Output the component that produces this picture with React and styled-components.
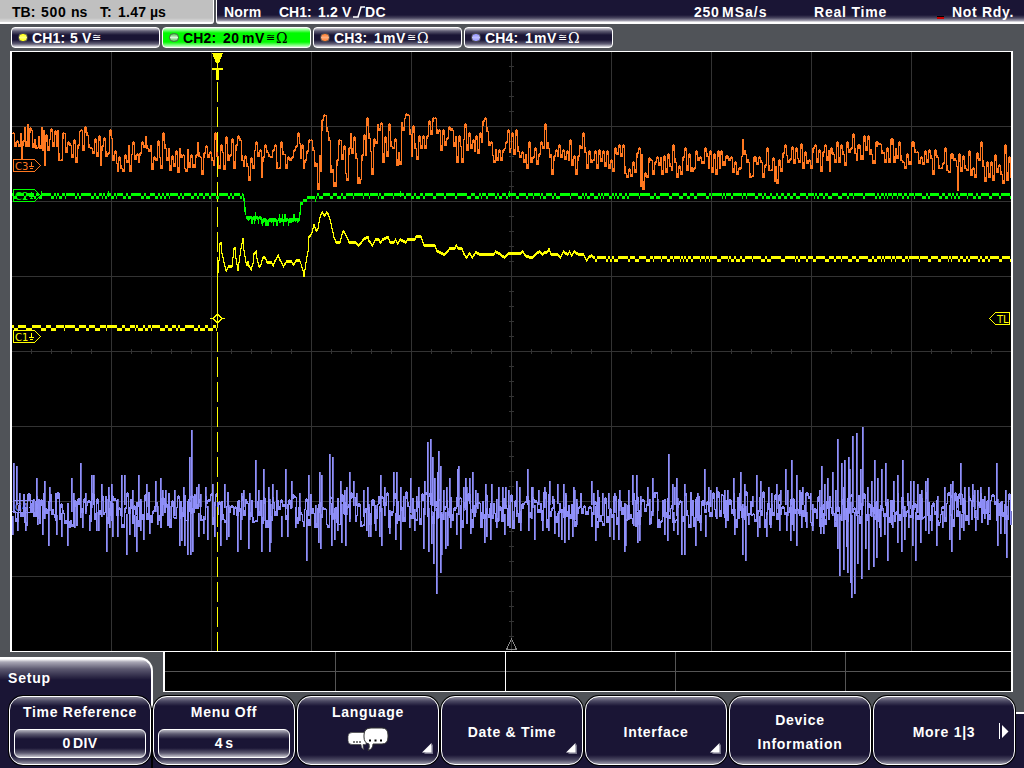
import styled, { createGlobalStyle } from 'styled-components';

const GlobalStyle = createGlobalStyle`
  body {
    margin: 0;
    background: #505358;
    font-family: 'Liberation Sans', Arial, sans-serif;
    font-size: 14px;
    font-weight: bold;
    color: #fff;
  }

  * {
    box-sizing: border-box;
  }
`;

const Screen = styled.div`
  width: 1024px;
  height: 768px;
  overflow: hidden;
  display: flex;
  flex-direction: column;
  background: #505358;
`;

const TopBar = styled.header`
  display: flex;
  gap: 2px;
  height: 24px;
`;

const TimeBase = styled.div`
  display: flex;
  width: 214px;
  padding: 4px 0 0 12px;
  line-height: 16px;
  color: #000;
  background: linear-gradient(#c0c0c0 18px, #e0e0e0 22px, #fff 22px);
  border-right: 1px solid #fff;
  border-bottom-right-radius: 3px;
`;

const Status = styled.div`
  display: flex;
  flex: 1;
  padding: 4px 0 0 7px;
  line-height: 16px;
  background: linear-gradient(#1a1535 15px, #4a4660 18px, #a9a7b5 21px, #fff 22px);
  border-left: 1px solid #fff;
  border-bottom-left-radius: 3px;
`;

const Word = styled.span`
  flex: none;
  width: ${({ $w }) => $w}px;
  white-space: nowrap;
  letter-spacing: ${({ $spacing = 0 }) => $spacing}px;
`;

const Slope = styled.svg`
  flex: none;
  width: 12px;
  height: 16px;
`;

const NotReadyMark = styled.span`
  flex: none;
  width: 7px;
  height: 3px;
  margin: 12px 8px 0 0;
  border-top: 1px solid #000;
  background: #c80000;
`;

const Channels = styled.nav`
  display: flex;
  gap: 2px;
  height: 27px;
  padding: 3px 0 3px 11px;
`;

const ChannelTab = styled.div`
  display: flex;
  align-items: center;
  width: 149px;
  height: 21px;
  padding-left: 6px;
  border: 1px solid #fff;
  border-radius: 4px;
  color: ${({ $active }) => ($active ? '#000' : '#fff')};
  background: ${({ $active }) =>
    $active
      ? 'linear-gradient(#d8ffd8, #00fa00 5px, #00fa00 14px, #c8ffc8)'
      : 'linear-gradient(#d6d5dc, #625f76 3px, #1a1535 7px, #1a1535 12px, #625f76 16px, #e4e4e8)'};
`;

const Lamp = styled.span`
  width: 10px;
  height: 9px;
  margin-right: 4px;
  border: 1px solid ${({ $active }) => ($active ? '#4a6a4a' : '#555')};
  border-radius: 5px;
  background: ${({ $color, $shine }) => `linear-gradient(${$color}, ${$shine} 50%, ${$color})`};
`;

const Coupling = styled.span`
  width: 10px;
  font: 11px 'DejaVu Sans', sans-serif;
`;

const Ohm = styled.span`
  font: 14px 'DejaVu Serif', serif;
`;

const Graph = styled.svg`
  display: block;
  flex: none;
  width: 1024px;
  height: 601px;
`;

const Footer = styled.footer`
  position: relative;
  height: 116px;
  background: linear-gradient(transparent 60px, #fff 60px, #fff 62px, #1a1535 62px);
`;

const Overview = styled.svg`
  display: block;
  width: 850px;
  height: 40px;
  margin-left: 163px;
`;

const SetupTab = styled.div`
  position: absolute;
  left: 0;
  top: 5px;
  width: 153px;
  height: 111px;
  padding: 11px 0 0 8px;
  line-height: 16px;
  letter-spacing: 0.8px;
  border-top: 2px solid #fff;
  border-right: 2px solid #fff;
  border-top-right-radius: 14px;
  background: linear-gradient(#fff, #aaa8b6 3px, #5c5970 10px, #1a1535 21px);

  &::after {
    content: '';
    position: absolute;
    right: -2px;
    bottom: 0;
    width: 2px;
    height: 60px;
    background: #000;
  }
`;

const Menu = styled.div`
  position: absolute;
  top: 44px;
  left: 9px;
  display: flex;
  gap: 2px;
`;

const MenuButton = styled.div`
  position: relative;
  display: flex;
  flex-direction: column;
  align-items: center;
  justify-content: ${({ $top }) => ($top ? 'flex-start' : 'center')};
  width: 142px;
  height: 69px;
  padding-top: ${({ $top }) => ($top ? 3 : 2)}px;
  line-height: 24px;
  letter-spacing: 0.72px;
  text-align: center;
  white-space: pre-line;
  border: 1px solid #fff;
  border-radius: 14px;
  box-shadow: 0 0 0 1px #000;
  background: linear-gradient(#8e8c9d, #4c4963 4px, #1a1535 9px, #1a1535 58px, #4c4963 63px, #9b99a8);
`;

const Value = styled.div`
  width: 132px;
  height: 29px;
  margin-top: 5px;
  line-height: 27px;
  letter-spacing: 0.4px;
  word-spacing: -2px;
  border: 1px solid #fff;
  border-radius: 6px;
  background: linear-gradient(#b6b5c0, #5c5970 4px, #1a1535 9px, #1a1535 18px, #5c5970 23px, #c6c5ce);
`;

const Corner = styled.svg`
  position: absolute;
  right: 5px;
  bottom: 10px;
  width: 11px;
  height: 11px;
`;

const NextArrow = styled.svg`
  position: absolute;
  right: 4px;
  top: 26px;
  width: 12px;
  height: 17px;
`;

const Bubbles = styled.svg`
  width: 42px;
  height: 26px;
  margin-top: 3px;
`;

const CHANNELS = [
  { name: 'CH1:', scale: '5', unit: 'V', color: '#ffff00', shine: '#ffff80', scaleWidth: 12, unitWidth: 10 },
  { name: 'CH2:', scale: '20', unit: 'mV', color: '#50c050', shine: '#d8f8d8', scaleWidth: 19, unitWidth: 24, ohm: true, active: true },
  { name: 'CH3:', scale: '1', unit: 'mV', color: '#ff7828', shine: '#ffb080', scaleWidth: 9, unitWidth: 24, ohm: true },
  { name: 'CH4:', scale: '1', unit: 'mV', color: '#9090ff', shine: '#c0c0ff', scaleWidth: 9, unitWidth: 24, ohm: true },
];

// x y pairs, in screen pixels
const CH3_POINTS = `
12 133 14 146 16 141 18 146 20 133 21 159 22 141 24 127 25 146 27 124 28 146 29 128 31 130 32 147 34 139 35 148 37 147 38 136
39 148 41 127 42 150 43 130 44 165 45 135 47 150 49 139 50 129 52 146 54 131 56 146 57 130 58 160 60 160 62 133 64 133 65 152
67 142 69 145 71 157 73 140 75 162 77 145 79 131 80 130 82 150 84 127 86 135 88 147 90 148 92 153 94 139 96 156 98 136 100 165
101 146 103 138 105 156 107 153 109 130 111 138 112 160 114 151 116 163 117 171 118 157 120 168 122 171 124 155 126 162 128 145
129 171 131 154 132 142 134 159 136 154 138 162 139 153 141 142 143 147 145 136 146 148 148 151 150 145 151 169 153 157 155 160
157 141 159 157 160 168 162 133 164 148 166 160 168 148 169 170 171 156 173 166 175 151 177 172 179 148 180 157 182 155 184 168
185 171 187 149 188 167 190 155 192 167 195 155 197 142 198 156 200 157 201 174 203 153 205 146 207 157 209 152 211 160 213 165
214 133 216 156 218 168 220 145 222 152 223 169 225 137 227 160 229 155 231 139 233 168 235 145 237 136 239 140 241 160 243 166
244 156 246 166 248 180 250 158 252 168 254 150 255 142 257 156 259 150 261 177 262 157 264 145 266 152 268 156 270 157 272 150
274 145 276 168 278 168 280 142 282 154 284 154 285 168 287 157 289 160 291 157 293 150 295 146 297 133 299 143 300 158 301 145
303 168 304 160 306 151 308 140 310 140 312 150 314 166 316 163 317 189 319 155 320 171 321 120 323 115 325 115 326 131 328 140
330 172 332 169 333 186 336 160 338 140 340 140 341 159 343 146 345 173 346 180 348 148 350 133 351 153 353 137 355 158 357 183
360 179 361 155 363 135 365 155 366 118 368 138 370 151 371 174 373 139 375 143 377 124 378 130 380 123 382 162 384 137 386 156
388 124 390 146 392 148 394 139 396 165 398 152 399 164 401 122 402 130 404 118 405 114 407 115 409 134 411 156 412 126 414 148
416 159 418 136 420 148 422 136 424 148 426 136 428 121 430 134 432 118 434 118 436 133 438 130 440 150 442 130 444 145 446 138
448 127 450 130 453 146 455 136 456 162 458 136 460 146 461 162 463 139 464 124 466 150 468 133 470 148 472 140 474 151 475 136
477 153 479 133 481 142 482 121 484 118 486 131 488 145 490 142 492 155 493 162 495 149 496 160 498 150 500 160 502 150 504 148
505 142 507 130 509 152 510 148 511 133 513 154 515 130 517 151 519 157 521 152 523 162 525 154 526 168 528 142 530 162 532 157
534 148 536 164 538 154 540 142 542 148 544 124 546 148 549 157 550 154 551 174 553 156 555 150 557 156 558 145 560 157 562 150
564 159 566 151 568 160 569 140 571 165 573 156 575 174 577 156 579 145 580 148 582 133 584 152 586 168 588 151 590 162 592 160
594 151 596 168 598 150 600 161 602 151 604 166 606 151 608 168 610 160 612 171 614 148 616 154 618 145 620 156 622 145 624 173
626 177 628 169 630 176 632 162 634 172 636 153 638 148 640 186 641 154 642 189 644 173 646 177 648 158 650 160 652 174 654 162
656 157 658 165 660 157 661 174 663 156 665 172 667 154 669 166 671 170 672 145 674 162 676 177 678 166 680 174 682 157 684 148
686 170 688 154 690 171 693 168 695 151 697 160 699 157 701 163 704 148 706 156 708 168 709 151 711 172 713 154 715 174 717 151
719 168 720 151 722 165 725 156 728 160 730 157 732 172 734 162 736 174 738 168 741 156 742 139 743 154 746 162 749 177 751 176
753 157 756 164 758 157 760 162 762 177 764 165 766 148 768 170 770 170 772 158 774 181 775 166 776 183 778 160 780 171 782 153
784 145 786 155 787 162 789 159 791 147 793 163 795 148 797 158 798 162 800 144 802 168 804 152 806 163 808 160 810 168 812 148
814 145 816 162 818 150 820 171 822 152 824 145 826 160 828 150 829 171 830 148 832 154 834 162 836 142 838 162 840 145 842 154
844 165 846 142 848 152 850 148 852 134 854 153 856 160 857 145 860 159 863 136 865 150 867 136 869 154 872 163 875 142 878 144
881 153 883 152 884 162 886 148 888 162 890 139 893 162 895 148 896 158 898 142 900 160 902 162 904 168 906 154 908 164 911 142
914 152 916 152 918 163 920 157 922 164 924 151 926 162 928 150 930 158 932 174 934 150 936 157 938 168 940 168 942 163 944 148
946 170 948 172 950 154 953 160 956 166 957 190 958 154 960 171 962 156 964 168 966 170 968 151 970 175 972 168 974 177 976 153
978 160 980 142 982 166 984 181 986 162 988 177 990 162 992 180 994 155 996 172 998 165 1000 174 1002 183 1004 145 1006 180
1008 157 1010 177`;

const CH1_POINTS = `
217 327 218 272 219 260 220 243 221 242 222 253 224 262 226 270 228 266 232 266 233 257 234 248 235 247 236 258 238 270 239 262
241 248 243 238 244 250 246 262 247 265 248 261 249 266 251 270 253 263 254 253 256 250 257 258 259 266 261 264 263 257 265 257
267 262 271 262 273 266 275 260 278 254 280 260 283 266 286 261 291 261 293 264 296 260 299 260 301 264 303 270 304 276 306 262
308 251 309 236 312 232 314 224 316 230 318 228 320 217 322 212 324 215 326 212 328 213 330 219 332 228 334 237 336 242 340 242
343 231 346 235 349 242 355 242 358 245 360 243 363 239 368 236 369 241 372 245 375 239 379 239 380 242 382 239 388 236 390 242
393 242 395 239 397 243 400 239 405 242 407 239 415 239 416 236 421 236 424 245 435 245 437 251 444 254 447 251 449 248 455 248
456 245 458 248 462 248 464 254 466 257 469 253 472 257 475 252 480 254 493 254 495 251 500 254 504 257 508 253 520 253 522 251
526 256 532 257 536 253 539 251 542 254 544 252 548 251 549 248 551 254 557 254 560 257 563 251 567 254 569 251 571 255 574 251
578 254 583 254 586 260 588 257 591 255 593 257`;

const CH4_PEAKS = `
12 535 13 463 16 466 17 531 19 493 25 531 33 499 36 478 37 525 42 535 44 481 48 546 49 487 55 493 56 535 61 537 67 546 71 478
73 493 74 528 80 463 82 528 85 493 89 531 91 475 93 475 96 531 98 531 101 484 106 552 108 487 109 528 111 484 112 537 117 537
121 475 124 475 126 555 129 535 132 490 134 537 136 552 138 475 140 531 143 540 146 484 149 534 155 481 157 525 160 478 162 490
165 490 169 528 174 490 179 546 181 541 183 487 184 546 187 555 189 457 191 430 190 555 192 552 194 494 196 487 198 484 200 494
198 537 203 534 205 487 207 540 212 484 214 537 220 546 224 484 226 540 228 537 237 552 240 540 241 493 243 490 248 549 249 493
255 460 258 490 261 552 263 469 268 487 269 552 270 543 272 484 276 490 281 537 285 469 287 537 291 481 295 528 299 493 306 561
308 475 315 528 318 543 319 472 321 475 320 549 329 454 331 546 332 457 334 540 337 531 340 481 341 543 344 490 345 546 346 487
349 472 353 481 356 493 363 490 366 531 367 487 368 537 370 537 375 531 379 537 381 546 380 475 384 487 389 534 393 472 396 472
395 540 400 550 400 487 403 496 409 528 410 478 414 531 416 496 418 487 424 481 423 549 427 442 428 552 430 439 431 544 432 457
433 564 434 478 437 472 436 594 438 451 440 573 440 466 441 555 443 490 445 549 446 487 447 546 449 478 450 528 456 535 457 469
458 466 460 549 463 487 465 478 466 487 469 478 470 534 472 472 475 490 477 493 481 528 484 543 485 484 486 537 490 540 491 484
496 528 498 487 502 487 504 535 505 487 508 490 512 528 516 481 519 487 520 531 527 469 528 531 531 487 532 487 534 540 538 490
542 531 544 487 548 531 549 481 552 496 554 534 557 484 558 537 561 540 563 484 564 543 565 493 568 540 573 487 572 537 574 490
576 525 591 481 593 493 595 541 597 490 602 493 609 537 608 493 613 540 614 493 618 540 619 490 624 552 625 546 628 490 632 475
633 526 636 475 637 543 639 541 640 496 647 487 649 525 652 478 657 499 664 535 668 454 667 541 672 484 673 531 674 487 676 478
677 535 681 555 684 555 684 484 690 528 695 546 697 493 700 531 704 469 705 537 708 487 710 490 716 487 725 528 724 490 727 490
733 478 734 535 739 493 740 472 742 555 745 561 744 484 748 525 752 496 756 475 757 537 760 481 759 528 766 537 768 487 770 528
771 493 776 484 779 531 780 490 785 469 786 531 787 490 790 541 791 460 793 531 796 475 796 546 799 490 801 528 802 487 806 528
805 493 810 493 812 531 819 490 821 466 820 534 823 534 824 484 827 478 832 472 835 490 834 522 837 549 837 439 839 576 841 463
843 487 843 570 844 460 846 547 847 573 848 457 849 469 850 583 851 598 852 436 854 594 856 433 857 564 860 469 861 579 862 427
865 549 867 487 868 570 871 481 873 567 874 460 876 558 877 478 879 528 881 469 880 537 884 535 885 463 887 561 893 481 892 528
897 475 897 543 901 552 902 460 904 540 907 493 908 528 910 481 912 546 913 481 915 561 917 484 920 543 921 490 925 481 925 531
927 478 928 534 931 531 936 546 937 496 942 528 944 487 949 540 950 484 951 552 952 481 957 496 959 540 960 463 961 528 964 487
963 531 968 487 968 525 972 484 974 490 975 531 977 490 980 487 984 496 988 487 987 525 996 463 997 546 1000 534 1005 490 1004 534
1006 558 1010 525`;

const parsePairs = (text) => {
  const n = text.trim().split(/\s+/).map(Number);
  const pairs = [];
  for (let i = 0; i < n.length; i += 2) pairs.push([n[i], n[i + 1]]);
  return pairs;
};

const createRandom = (seed) => {
  let s = seed;
  return () => {
    s = (s * 16807) % 2147483647;
    return s / 2147483647;
  };
};

// one vertical run of pixels, at least 3px tall
const column = (x, a, b = a, pad = 1.5) => `M${x + 0.5} ${Math.min(a, b) - pad}V${Math.max(a, b) + pad}`;

// a full-height bar at every sample, then a short hold until the next one
const steppedPath = (points) => {
  let d = '';
  points.forEach(([x, y], i) => {
    const prev = i ? points[i - 1][1] : y;
    const end = i < points.length - 1 ? points[i + 1][0] : x + 1;
    d += column(x, prev, y, 0.5);
    for (let c = x + 1; c < end; c += 1) d += column(c, y, y + (prev - y) * 0.2, 1);
  });
  return d;
};

const linearPath = (points, pad = 1) => {
  let d = '';
  for (let i = 1; i < points.length; i += 1) {
    const [x0, y0] = points[i - 1];
    const [x1, y1] = points[i];
    for (let x = x0; x < x1; x += 1) {
      const a = y0 + ((y1 - y0) * (x - x0)) / (x1 - x0);
      const b = y0 + ((y1 - y0) * (x + 1 - x0)) / (x1 - x0);
      d += Math.abs(b - a) > 2 ? column(x, a, b, pad) : column(x, Math.round(a));
    }
  }
  return d;
};

const flatPath = (from, to, high, low, seed, lowShare) => {
  const random = createRandom(seed);
  let d = '';
  let x = from;
  let isLow = false;
  while (x < to) {
    const run = isLow ? 1 + Math.floor(random() * 4 * lowShare) : 2 + Math.floor(random() ** 2 * 9);
    for (let i = 0; i < run && x < to; i += 1, x += 1) d += column(x, isLow ? low : high);
    isLow = !isLow;
  }
  return d;
};

const ch2Dip = () => {
  const random = createRandom(71);
  let d = column(243, 195, 199) + column(244, 199, 210) + column(245, 208, 213);
  for (let x = 246; x < 299; x += 1) {
    const mid = x < 262 ? 217 : 219;
    d += column(x, mid + Math.round(random() * 2), random() > 0.72 ? mid + (random() > 0.4 ? 5 : -4) : mid);
  }
  d += column(299, 213, 219) + column(300, 203, 213);
  for (let x = 301; x < 307; x += 1) d += column(x, x < 303 ? 203 : 200);
  for (let x = 307; x < 317; x += 1) d += column(x, x === 315 ? 200 : 197);
  return d;
};

const ch4Noise = () => {
  const random = createRandom(409);
  const points = [];
  let x = 12;
  let side = 1;
  while (x < 1011) {
    points.push([x, Math.round(510 + side * (1 + random() * 17))]);
    x += 1 + Math.floor(random() * 2.6);
    if (random() > 0.25) side = -side;
  }
  return steppedPath(points);
};

const CH4_PEAK_LIST = parsePairs(CH4_PEAKS);
const peakPath = (offset) => {
  const random = createRandom(57);
  return CH4_PEAK_LIST.map(([x, y]) => {
    const side = y < 510 ? -1 : 1;
    return `M${x + offset} ${y}V${Math.round(510 - side * (random() * 18 - 6))}`;
  }).join('');
};

const CH1_BEFORE = flatPath(12, 217, 326.5, 329.5, 13, 1.3);
const CH1_EDGE = linearPath(parsePairs(CH1_POINTS), 0.5);
const CH1_AFTER = flatPath(593, 1011, 257.5, 260.5, 25, 0.9);
const CH2_TRACE =
  flatPath(12, 243, 194.5, 197.5, 5, 0.9) +
  ch2Dip() +
  flatPath(317, 1011, 194.5, 197.5, 91, 0.9) +
  [41, 108, 400, 509].map((x) => column(x, 192, 195)).join('');
const CH3_TRACE = steppedPath(parsePairs(CH3_POINTS));
const CH4_NOISE = ch4Noise();
const CH4_SPIKES = peakPath(0.5);
const CH4_SHADES = peakPath(1.5);

const range = (from, to, step) => {
  const out = [];
  for (let v = from; v <= to; v += step) out.push(v);
  return out;
};

const Grid = () => (
  <path
    stroke="#333"
    d={[
      ...range(111, 911, 100).map((x) => `M${x + 0.5} 52V651`),
      ...range(126, 576, 75).map((y) => `M12 ${y + 0.5}H1011`),
      ...range(66, 636, 15).map((y) => `M509 ${y + 0.5}h5`),
      ...range(31, 991, 20).map((x) => `M${x + 0.5} 349v5`),
    ].join('')}
  />
);

const ChannelMarker = ({ label, y, color }) => (
  <g stroke={color} fill="none">
    <path d={`M13.5 ${y - 5.5}h21l6 6l-6 6h-21z`} />
    <text
      x="15"
      y={y + 4.5}
      fill={color}
      stroke="none"
      fontSize="10"
      fontWeight="normal"
      fontFamily="DejaVu Sans, sans-serif"
    >
      {label}
    </text>
    <path d={`M31.5 ${y - 3}v5M29 ${y + 1.5}h5M30 ${y + 3.5}h3`} />
  </g>
);

const Waveforms = () => (
  <Graph viewBox="0 51 1024 601" shapeRendering="crispEdges">
    <rect x="10" y="51" width="1003" height="601" fill="#fff" />
    <rect x="12" y="52" width="999" height="599" fill="#000" />
    <Grid />
    <path d={CH4_SHADES} stroke="#6c6cc0" />
    <path d={CH4_NOISE} stroke="#8c8cf4" />
    <path d={CH4_SPIKES} stroke="#9090fa" />
    <ChannelMarker label="C4" y={506} color="#8c8cf4" />
    <path d={CH3_TRACE} stroke="#ff7820" />
    <ChannelMarker label="C3" y={165} color="#ff7820" />
    <path d="M217.5 82V651" stroke="#ffff00" strokeDasharray="20 5" />
    <path d={CH2_TRACE} stroke="#00ff00" />
    <ChannelMarker label="C2" y={195} color="#00ff00" />
    <path d={CH1_BEFORE + CH1_EDGE + CH1_AFTER} stroke="#ffff00" />
    <ChannelMarker label="C1" y={336} color="#ffff00" />
    <path d="M212 53h11l-4 10h-3z" fill="#ffff00" />
    <path d="M217.5 63v5" stroke="#ffff00" />
    <path d="M212 68h11v2h-4v10h-3v-10h-4z" fill="#ffff00" />
    <path d="M210 318.5h3l4.5-4.5l4.5 4.5h3m-3 0l-4.5 4.5l-4.5-4.5" stroke="#ffff00" fill="none" />
    <path d="M1009.5 312.5v12h-14l-6-6l6-6z" stroke="#ffff00" fill="none" />
    <text x="997" y="322.5" fill="#ffff00" fontSize="10" fontWeight="normal" fontFamily="DejaVu Sans, sans-serif">
      TL
    </text>
    <path d="M511.5 639l-5 10.5h10z" stroke="#888" fill="none" />
  </Graph>
);

const OverviewStrip = () => (
  <Overview viewBox="163 652 850 40" shapeRendering="crispEdges">
    <rect x="163" y="652" width="850" height="40" fill="#fff" />
    <rect x="165" y="652" width="846" height="39" fill="#000" />
    <path d="M165 671.5H1011M335.5 652v39M675.5 652v39M845.5 652v39" stroke="#555" />
    <path d="M505.5 652v39" stroke="#fff" />
  </Overview>
);

const Submenu = () => (
  <Corner viewBox="0 0 11 11">
    <path d="M11 1v10H2z" fill="#77758a" />
    <path d="M9.5 0v9.5H0z" fill="#fff" />
  </Corner>
);

const LanguageIcon = () => (
  <Bubbles viewBox="0 0 42 26">
    <path
      d="M5 5.5h14v12h-3q0 4 1 5q-3-1-3-5H5q-4 0-4-4V9.5q0-4 4-4z"
      fill="#fff"
      stroke="#444"
      strokeWidth="0.7"
    />
    <path
      d="M24 1h11q6 0 6 7v2q0 7-6 7H26q0 5-5 6.5q2-3 1-6.5q-5-1-5-7V8q0-7 7-7z"
      fill="#fff"
      stroke="#333"
      strokeWidth="1"
    />
    <path d="M6.5 15h1M9.500 15h1M12.500 15h1M22 13.500h2M27.500 13.500h2M33 13.500h2" stroke="#000" strokeWidth="2" />
  </Bubbles>
);

const App = () => {
  return (
    <>
      <GlobalStyle />
      <Screen>
        <TopBar>
          <TimeBase>
            <Word $w={29}>TB:</Word>
            <Word $w={30} $spacing={0.7}>500</Word>
            <Word $w={29}>ns</Word>
            <Word $w={18}>T:</Word>
            <Word $w={32} $spacing={0.3}>1.47</Word>
            <Word $w={20}>µs</Word>
          </TimeBase>
          <Status>
            <Word $w={55} $spacing={0.2}>Norm</Word>
            <Word $w={39}>CH1:</Word>
            <Word $w={24} $spacing={0.2}>1.2</Word>
            <Word $w={11}>V</Word>
            <Slope viewBox="0 0 12 16">
              <path d="M0 13h5L8 3h4" fill="none" stroke="#fff" strokeWidth="1.6" />
            </Slope>
            <Word $w={329} $spacing={0.3}>DC</Word>
            <Word $w={28} $spacing={0.7}>250</Word>
            <Word $w={92} $spacing={1}>MSa/s</Word>
            <Word $w={123} $spacing={0.8}>Real Time</Word>
            <NotReadyMark />
            <Word $w={70} $spacing={0.7}>Not Rdy.</Word>
          </Status>
        </TopBar>
        <Channels>
          {CHANNELS.map((ch) => (
            <ChannelTab key={ch.name} $active={ch.active}>
              <Lamp $color={ch.color} $shine={ch.shine} $active={ch.active} />
              <Word $w={ch.scale === '5' ? 38 : 40} $spacing={0.2}>{ch.name}</Word>
              <Word $w={ch.scaleWidth} $spacing={0.5}>{ch.scale}</Word>
              <Word $w={ch.unitWidth} $spacing={0.5}>{ch.unit}</Word>
              <Coupling>≅</Coupling>
              {ch.ohm && <Ohm>Ω</Ohm>}
            </ChannelTab>
          ))}
        </Channels>
        <Waveforms />
        <Footer>
          <OverviewStrip />
          <SetupTab>Setup</SetupTab>
          <Menu>
            <MenuButton $top>
              Time Reference
              <Value>0 DIV</Value>
            </MenuButton>
            <MenuButton $top>
              Menu Off
              <Value>4 s</Value>
            </MenuButton>
            <MenuButton $top>
              Language
              <LanguageIcon />
              <Submenu />
            </MenuButton>
            <MenuButton>
              Date &amp; Time
              <Submenu />
            </MenuButton>
            <MenuButton>
              Interface
              <Submenu />
            </MenuButton>
            <MenuButton>{'Device\nInformation'}</MenuButton>
            <MenuButton>
              More 1|3
              <NextArrow viewBox="0 0 12 17">
                <path d="M1.5 0v16" stroke="#fff" />
                <path d="M4 2l6.5 6.5L4 15z" fill="#fff" />
              </NextArrow>
            </MenuButton>
          </Menu>
        </Footer>
      </Screen>
    </>
  );
};

export default App;
